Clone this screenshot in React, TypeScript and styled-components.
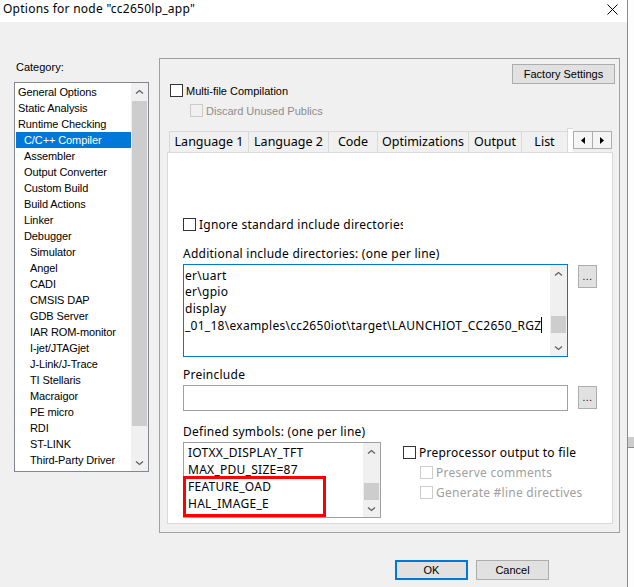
import React from 'react';
import styled, { createGlobalStyle } from 'styled-components';

const yahei = `"Noto Sans", "Open Sans", sans-serif`;
const tahoma = `"Liberation Sans", Arial, sans-serif`;

const GlobalStyle = createGlobalStyle`
  html, body {
    margin: 0;
    padding: 0;
    background: #ffffff;
  }
  body {
    font-family: ${tahoma};
    color: #000;
  }
  * {
    box-sizing: border-box;
  }
`;

const Screen = styled.div`
  width: 634px;
  height: 587px;
  display: flex;
  overflow: hidden;
`;

const Dialog = styled.div`
  width: 628px;
  border-right: 1px solid #8c8c8c;
  display: flex;
  flex-direction: column;
  background: #f0f0f0;
`;

const OutsideStrip = styled.div`
  flex: 1;
  background: #fdfdfd;
  display: flex;
  flex-direction: column;
`;

const OutsideBand = styled.div`
  margin-top: 437px;
  height: 11px;
  background: #cdcdcd;
  border-bottom: 1px solid #8a8a8a;
`;

const TitleBar = styled.div`
  height: 22px;
  background: #fff;
  display: flex;
  align-items: center;
  justify-content: space-between;
  padding-left: 3px;
`;

const TitleText = styled.span`
  font-family: ${yahei};
  font-size: 12px;
  line-height: 16px;
  letter-spacing: 0.25px;
  margin-top: -4px;
`;

const CloseButton = styled.div`
  width: 30px;
  height: 22px;
  display: flex;
  align-items: center;
  justify-content: center;
  margin-top: -4px;
`;

const MainRow = styled.div`
  display: flex;
  align-items: flex-start;
  gap: 10px;
  padding-left: 14px;
  margin-top: 36px;
`;

const LeftCol = styled.div`
  width: 135px;
  margin-top: 2px;
  display: flex;
  flex-direction: column;
`;

const SmallLabel = styled.div`
  font-family: ${tahoma};
  font-size: 11px;
  line-height: 14px;
  padding-left: 2px;
  margin-bottom: 8px;
`;

const ListBox = styled.div`
  width: 135px;
  height: 390px;
  border: 1px solid #828790;
  background: #fff;
  display: flex;
`;

const ListItems = styled.div`
  flex: 1;
  padding: 1px 0 0 1px;
`;

const ListItem = styled.div<{ $level: number; $selected?: boolean }>`
  height: 16px;
  line-height: 16px;
  font-family: ${tahoma};
  font-size: 11px;
  letter-spacing: -0.1px;
  white-space: nowrap;
  padding-left: ${(p) => 2 + p.$level * 6}px;
  background: ${(p) => (p.$selected ? '#0078d7' : 'transparent')};
  color: ${(p) => (p.$selected ? '#fff' : '#000')};
`;

const ScrollBar = styled.div`
  width: 17px;
  flex: none;
  display: flex;
  flex-direction: column;
  background: #f0f0f0;
`;

const ScrollArrow = styled.div`
  height: 17px;
  display: flex;
  align-items: center;
  justify-content: center;
  flex: none;
`;

const ScrollThumb = styled.div<{ $offset: number; $size: number }>`
  margin: ${(p) => p.$offset}px 1px 0 1px;
  height: ${(p) => p.$size}px;
  background: #cdcdcd;
  flex: none;
`;

const ScrollRest = styled.div`
  flex: 1;
`;

const GroupPanel = styled.div`
  width: 461px;
  height: 475px;
  border: 1px solid #a0a0a0;
  display: flex;
  flex-direction: column;
`;

const TopRow = styled.div`
  display: flex;
  justify-content: space-between;
  align-items: flex-start;
  padding: 0 4px 0 10px;
`;

const TopOptions = styled.div`
  padding-top: 25px;
  display: flex;
  flex-direction: column;
  gap: 7px;
`;

const CheckRow = styled.label<{ $indent?: number }>`
  display: flex;
  align-items: center;
  gap: 3px;
  height: 13px;
  margin-left: ${(p) => p.$indent ?? 0}px;
`;

const CheckBox = styled.span<{ $disabled?: boolean; $onPane?: boolean }>`
  width: 13px;
  height: 13px;
  flex: none;
  border: 1px solid ${(p) => (p.$disabled ? '#cccccc' : '#333333')};
  background: ${(p) => (p.$disabled && !p.$onPane ? '#f0f0f0' : '#fff')};
`;

const CheckText = styled.span<{ $disabled?: boolean }>`
  font-family: ${tahoma};
  font-size: 11px;
  line-height: 14px;
  color: ${(p) => (p.$disabled ? '#8d8d8d' : '#000')};
  white-space: nowrap;
`;

const PaneCheckText = styled.span<{ $disabled?: boolean; $clip?: number }>`
  font-family: ${yahei};
  font-size: 12px;
  line-height: 16px;
  letter-spacing: 0.25px;
  color: ${(p) => (p.$disabled ? '#a0a0a0' : '#000')};
  white-space: nowrap;
  overflow: hidden;
  ${(p) => (p.$clip ? `width: ${p.$clip}px;` : '')}
`;

const PushButton = styled.div<{ $w: number; $h: number; $default?: boolean }>`
  width: ${(p) => p.$w}px;
  height: ${(p) => p.$h}px;
  flex: none;
  background: #e1e1e1;
  border: ${(p) => (p.$default ? '2px solid #0078d7' : '1px solid #adadad')};
  display: flex;
  align-items: center;
  justify-content: center;
  font-family: ${tahoma};
  font-size: 11px;
`;

const FactoryButton = styled(PushButton)`
  margin-top: 5px;
`;

const TabsRow = styled.div`
  display: flex;
  align-items: flex-start;
  margin: 11px 0 0 9px;
  height: 24px;
`;

const TabStrip = styled.div`
  width: 404px;
  height: 24px;
  overflow: hidden;
  display: flex;
  align-items: flex-end;
`;

const Tab = styled.div<{ $w: number; $active?: boolean }>`
  width: ${(p) => p.$w}px;
  height: ${(p) => (p.$active ? 24 : 21)}px;
  flex: none;
  border-top: 1px solid #d9d9d9;
  border-left: 1px solid #d9d9d9;
  background: ${(p) => (p.$active ? '#fff' : '#f0f0f0')};
  font-family: ${yahei};
  font-size: 12.5px;
  line-height: 20px;
  text-align: center;
  white-space: nowrap;
`;

const TabArrows = styled.div`
  display: flex;
  margin-top: 3px;
`;

const TabArrow = styled.div`
  width: 20px;
  height: 18px;
  border: 1px solid #adadad;
  background: #f5f5f5;
  display: flex;
  align-items: center;
  justify-content: center;
  & + & {
    margin-left: -1px;
  }
`;

const Pane = styled.div`
  position: relative;
  flex: 1;
  margin: 0 6px 8px 7px;
  background: #fff;
  border: 1px solid #d9d9d9;
  padding: 65px 0 0 15px;
  display: flex;
  flex-direction: column;
`;

const FieldLabel = styled.div<{ $gap: number }>`
  font-family: ${yahei};
  font-size: 12px;
  line-height: 16px;
  letter-spacing: 0.25px;
  margin-top: ${(p) => p.$gap}px;
  white-space: nowrap;
`;

const FieldRow = styled.div`
  display: flex;
  align-items: flex-start;
  margin-top: 2px;
`;

const EditBox = styled.div<{ $w: number; $h: number; $focused?: boolean }>`
  width: ${(p) => p.$w}px;
  height: ${(p) => p.$h}px;
  flex: none;
  border: 1px solid ${(p) => (p.$focused ? '#0078d7' : '#a0a0a0')};
  background: #fff;
  display: flex;
`;

const EditLines = styled.div<{ $lh: number; $pt: number; $pl: number }>`
  flex: 1;
  overflow: hidden;
  padding: ${(p) => p.$pt}px 0 0 ${(p) => p.$pl}px;
  font-family: ${yahei};
  font-size: 12px;
  letter-spacing: 0.27px;
  line-height: ${(p) => p.$lh}px;
  white-space: nowrap;
`;

const Caret = styled.span`
  display: inline-block;
  width: 1px;
  height: 16px;
  background: #000;
  vertical-align: -3px;
`;

const BrowseButton = styled(PushButton)`
  margin: 1px 0 0 10px;
  align-items: flex-end;
  padding-bottom: 5px;
  font-size: 10px;
  letter-spacing: 0.5px;
`;

const PreprocColumn = styled.div`
  margin-left: 22px;
  padding-top: 4px;
  display: flex;
  flex-direction: column;
  gap: 7px;
`;

const HighlightFrame = styled.div`
  position: absolute;
  left: 15px;
  top: 323px;
  width: 143px;
  height: 41px;
  border: 3px solid #ff0000;
  pointer-events: none;
`;

const Footer = styled.div`
  display: flex;
  gap: 8px;
  padding-left: 395px;
  margin-top: 27px;
`;

const Chevron = ({ down }: { down?: boolean }) => (
  <svg width="9" height="6" viewBox="0 0 9 6">
    <path
      d={down ? 'M1 1.5 L4.5 4.5 L8 1.5' : 'M1 4.5 L4.5 1.5 L8 4.5'}
      fill="none"
      stroke="#606060"
      strokeWidth="1.3"
    />
  </svg>
);

const Triangle = ({ right }: { right?: boolean }) => (
  <svg width="4" height="7" viewBox="0 0 4 7">
    <path d={right ? 'M0 0 L4 3.5 L0 7 Z' : 'M4 0 L0 3.5 L4 7 Z'} fill="#000" />
  </svg>
);

const VScroll = ({ offset, size }: { offset: number; size: number }) => (
  <ScrollBar>
    <ScrollArrow>
      <Chevron />
    </ScrollArrow>
    <ScrollThumb $offset={offset} $size={size} />
    <ScrollRest />
    <ScrollArrow>
      <Chevron down />
    </ScrollArrow>
  </ScrollBar>
);

const categories: [string, number][] = [
  ['General Options', 0],
  ['Static Analysis', 0],
  ['Runtime Checking', 0],
  ['C/C++ Compiler', 1],
  ['Assembler', 1],
  ['Output Converter', 1],
  ['Custom Build', 1],
  ['Build Actions', 1],
  ['Linker', 1],
  ['Debugger', 1],
  ['Simulator', 2],
  ['Angel', 2],
  ['CADI', 2],
  ['CMSIS DAP', 2],
  ['GDB Server', 2],
  ['IAR ROM-monitor', 2],
  ['I-jet/JTAGjet', 2],
  ['J-Link/J-Trace', 2],
  ['TI Stellaris', 2],
  ['Macraigor', 2],
  ['PE micro', 2],
  ['RDI', 2],
  ['ST-LINK', 2],
  ['Third-Party Driver', 2],
];

const tabs: [string, number][] = [
  ['Language 1', 79],
  ['Language 2', 80],
  ['Code', 49],
  ['Optimizations', 91],
  ['Output', 53],
  ['List', 46],
];

const includeDirs = [
  'er\\uart',
  'er\\gpio',
  'display',
  '_01_18\\examples\\cc2650iot\\target\\LAUNCHIOT_CC2650_RGZ',
];

const symbols = ['IOTXX_DISPLAY_TFT', 'MAX_PDU_SIZE=87', 'FEATURE_OAD', 'HAL_IMAGE_E'];

export default function App() {
  return (
    <Screen>
      <GlobalStyle />
      <Dialog>
        <TitleBar>
          <TitleText>Options for node "cc2650lp_app"</TitleText>
          <CloseButton>
            <svg width="11" height="11" viewBox="0 0 11 11">
              <path d="M0.5 0.5 L10.5 10.5 M10.5 0.5 L0.5 10.5" stroke="#000" strokeWidth="1" />
            </svg>
          </CloseButton>
        </TitleBar>

        <MainRow>
          <LeftCol>
            <SmallLabel>Category:</SmallLabel>
            <ListBox>
              <ListItems>
                {categories.map(([name, level], i) => (
                  <ListItem key={name} $level={level} $selected={i === 3}>
                    {name}
                  </ListItem>
                ))}
              </ListItems>
              <VScroll offset={1} size={325} />
            </ListBox>
          </LeftCol>

          <GroupPanel>
            <TopRow>
              <TopOptions>
                <CheckRow>
                  <CheckBox />
                  <CheckText>Multi-file Compilation</CheckText>
                </CheckRow>
                <CheckRow $indent={20}>
                  <CheckBox $disabled />
                  <CheckText $disabled>Discard Unused Publics</CheckText>
                </CheckRow>
              </TopOptions>
              <FactoryButton $w={103} $h={20}>
                Factory Settings
              </FactoryButton>
            </TopRow>

            <TabsRow>
              <TabStrip>
                {tabs.map(([name, w]) => (
                  <Tab key={name} $w={w}>
                    {name}
                  </Tab>
                ))}
                <Tab $w={90} $active />
              </TabStrip>
              <TabArrows>
                <TabArrow>
                  <Triangle />
                </TabArrow>
                <TabArrow>
                  <Triangle right />
                </TabArrow>
              </TabArrows>
            </TabsRow>

            <Pane>
              <CheckRow>
                <CheckBox $onPane />
                <PaneCheckText $clip={204}>Ignore standard include directories</PaneCheckText>
              </CheckRow>

              <FieldLabel $gap={15}>Additional include directories: (one per line)</FieldLabel>
              <FieldRow>
                <EditBox $w={385} $h={93} $focused>
                  <EditLines $lh={16.3} $pt={3} $pl={1}>
                    {includeDirs.map((line, i) => (
                      <div key={line}>
                        {line}
                        {i === includeDirs.length - 1 && <Caret />}
                      </div>
                    ))}
                  </EditLines>
                  <VScroll offset={34} size={17} />
                </EditBox>
                <BrowseButton $w={19} $h={23}>
                  ...
                </BrowseButton>
              </FieldRow>

              <FieldLabel $gap={10}>Preinclude</FieldLabel>
              <FieldRow>
                <EditBox $w={385} $h={26} />
                <BrowseButton $w={19} $h={23}>
                  ...
                </BrowseButton>
              </FieldRow>

              <FieldLabel $gap={13}>Defined symbols: (one per line)</FieldLabel>
              <FieldRow>
                <EditBox $w={198} $h={76}>
                  <EditLines $lh={17} $pt={1} $pl={4}>
                    {symbols.map((s) => (
                      <div key={s}>{s}</div>
                    ))}
                  </EditLines>
                  <VScroll offset={23} size={17} />
                </EditBox>
                <PreprocColumn>
                  <CheckRow>
                    <CheckBox $onPane />
                    <PaneCheckText>Preprocessor output to file</PaneCheckText>
                  </CheckRow>
                  <CheckRow $indent={17}>
                    <CheckBox $disabled $onPane />
                    <PaneCheckText $disabled>Preserve comments</PaneCheckText>
                  </CheckRow>
                  <CheckRow $indent={17}>
                    <CheckBox $disabled $onPane />
                    <PaneCheckText $disabled>Generate #line directives</PaneCheckText>
                  </CheckRow>
                </PreprocColumn>
              </FieldRow>

              <HighlightFrame />
            </Pane>
          </GroupPanel>
        </MainRow>

        <Footer>
          <PushButton $w={73} $h={20} $default>
            OK
          </PushButton>
          <PushButton $w={73} $h={20}>
            Cancel
          </PushButton>
        </Footer>
      </Dialog>
      <OutsideStrip>
        <OutsideBand />
      </OutsideStrip>
    </Screen>
  );
}
